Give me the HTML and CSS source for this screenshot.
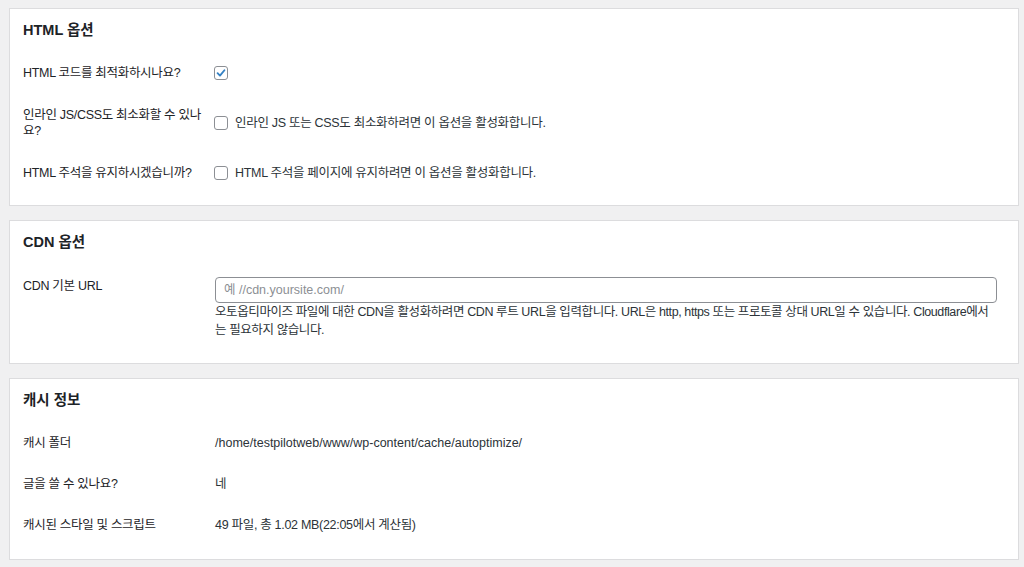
FILE: index.html
```html
<!DOCTYPE html>
<html lang="ko">
<head>
<meta charset="utf-8">
<title>Autoptimize 설정</title>
<link rel="stylesheet" href="styles.css">
</head>
<body>
<main class="page">
  <section class="panel panel-html">
    <h2 class="panel-title">HTML 옵션</h2>
    <div class="rows">
      <div class="row">
        <div class="label">HTML 코드를 최적화하시나요?</div>
        <div class="field"><span class="check checked"><svg viewBox="0 0 14 14" width="14" height="14"><path d="M3 7.2 L5.8 10 L11 3.8" fill="none" stroke="#3582c4" stroke-width="2.2" stroke-linecap="round" stroke-linejoin="round"/></svg></span></div>
      </div>
      <div class="row">
        <div class="label">인라인 JS/CSS도 최소화할 수 있나<br>요?</div>
        <div class="field"><span class="check"></span><span class="check-text">인라인 JS 또는 CSS도 최소화하려면 이 옵션을 활성화합니다.</span></div>
      </div>
      <div class="row">
        <div class="label">HTML 주석을 유지하시겠습니까?</div>
        <div class="field"><span class="check"></span><span class="check-text">HTML 주석을 페이지에 유지하려면 이 옵션을 활성화합니다.</span></div>
      </div>
    </div>
  </section>

  <section class="panel panel-cdn">
    <h2 class="panel-title">CDN 옵션</h2>
    <div class="cdn-row">
      <div class="label label-top">CDN 기본 URL</div>
      <div class="cdn-field">
        <div class="input"><span class="placeholder">예 //cdn.yoursite.com/</span></div>
        <p class="desc">오토옵티마이즈 파일에 대한 CDN을 활성화하려면 CDN 루트 URL을 입력합니다. URL은 http, https 또는 프로토콜 상대 URL일 수 있습니다. Cloudflare에서는 필요하지 않습니다.</p>
      </div>
    </div>
  </section>

  <section class="panel panel-cache">
    <h2 class="panel-title">캐시 정보</h2>
    <div class="rows">
      <div class="row row-info">
        <div class="label">캐시 폴더</div>
        <div class="field path">/home/testpilotweb/www/wp-content/cache/autoptimize/</div>
      </div>
      <div class="row row-info">
        <div class="label">글을 쓸 수 있나요?</div>
        <div class="field">네</div>
      </div>
      <div class="row row-info">
        <div class="label">캐시된 스타일 및 스크립트</div>
        <div class="field">49 파일, 총 1.02 MB(22:05에서 계산됨)</div>
      </div>
    </div>
  </section>
</main>
</body>
</html>
```

FILE: styles.css
```css
* { box-sizing: border-box; }
html, body { margin: 0; padding: 0; }
body {
  background: #f0f0f1;
  font-family: "Liberation Sans", "Noto Sans CJK KR", sans-serif;
  font-size: 12.5px;
  letter-spacing: -0.3px;
  color: #3c434a;
  width: 1024px;
  height: 567px;
  overflow: hidden;
}
.page {
  padding: 8px 5px 0 9px;
  display: flex;
  flex-direction: column;
  gap: 14px;
}
.panel {
  background: #fff;
  border: 1px solid #dcdcde;
  padding: 0 21px 0 13px;
}
.panel-title {
  margin: 0;
  padding-top: 11px;
  font-size: 14.5px;
  line-height: 20px;
  font-weight: 700;
  letter-spacing: 0;
  color: #1d2327;
}
.rows { display: flex; flex-direction: column; }
.row {
  display: grid;
  grid-template-columns: 192px 1fr;
  align-items: center;
  height: 50px;
}
.panel-html .rows { margin-top: 8px; padding-bottom: 7px; }
.label { line-height: 16px; color: #1d2327; }
.field { display: flex; align-items: center; line-height: 18px; color: #2c3338; }
.path { letter-spacing: 0; }
.check {
  width: 14px; height: 14px;
  border: 1px solid #8c8f94;
  border-radius: 3px;
  background: #fff;
  display: inline-flex;
  align-items: center;
  justify-content: center;
  flex: none;
  margin-left: -1px;
}
.check svg { display: block; }
.check-text { margin-left: 7px; }

.cdn-row {
  display: grid;
  grid-template-columns: 192px 1fr;
  padding-top: 25px;
  padding-bottom: 24px;
}
.label-top { line-height: 18px; }
.input {
  height: 26px;
  border: 1px solid #8c8f94;
  border-radius: 4px;
  display: flex;
  align-items: center;
  padding-left: 8px;
}
.placeholder { color: #8c8f94; line-height: 18px; letter-spacing: 0; }
.desc { margin: 0; line-height: 18px; letter-spacing: -0.4px; color: #2c3338; }

.panel-cache .rows { margin-top: 12px; padding-bottom: 14px; }
.row-info { height: 41px; }
```
